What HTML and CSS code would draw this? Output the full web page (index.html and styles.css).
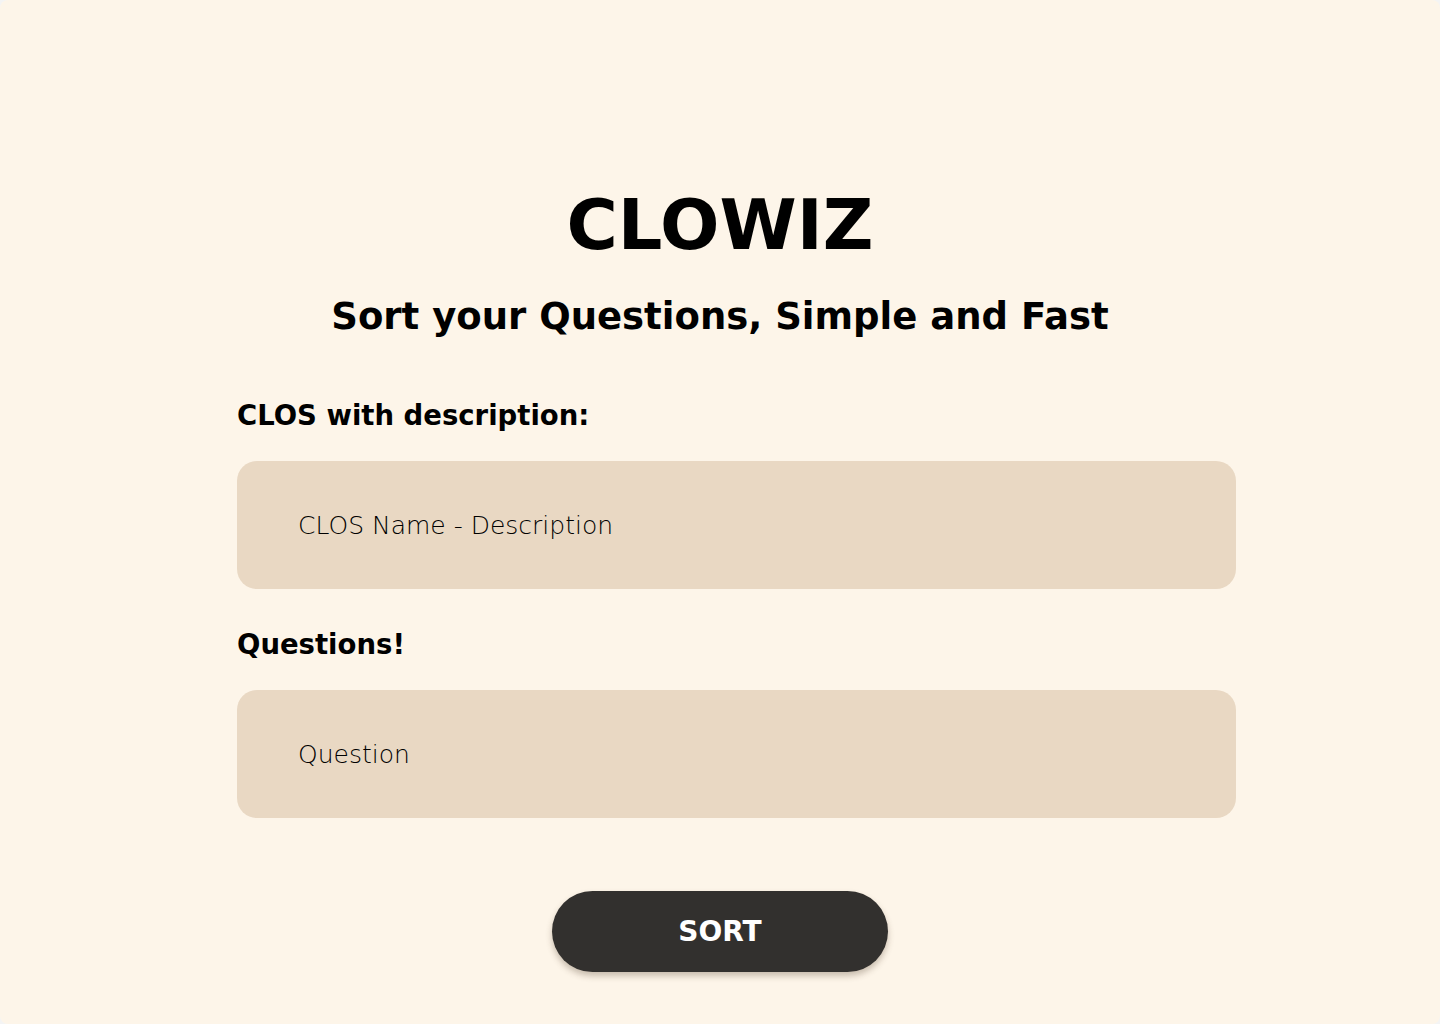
FILE: index.html
```html
<!DOCTYPE html>
<html lang="en">
<head>
<meta charset="utf-8">
<title>CLOWIZ</title>
<link rel="stylesheet" href="styles.css">
</head>
<body>
<div class="frame">
  <main class="app">
    <h1 class="title">CLOWIZ</h1>
    <h2 class="subtitle">Sort your Questions, Simple and Fast</h2>
    <form class="form">
      <label class="label" for="clos">CLOS with description:</label>
      <input class="field" id="clos" type="text" placeholder="CLOS Name - Description">
      <label class="label" for="q">Questions!</label>
      <input class="field" id="q" type="text" placeholder="Question">
    </form>
    <div class="actions">
      <button class="btn" type="button">SORT</button>
    </div>
  </main>
</div>
</body>
</html>
```

FILE: styles.css
```css
* { box-sizing: border-box; }
html, body { margin: 0; padding: 0; background: #f4f4f4; }
body { font-family: "DejaVu Sans", "Open Sans", sans-serif; color: #000; }
.frame {
  width: 1440px;
  height: 1024px;
  background: #fdf5e9;
  border-radius: 8px;
  overflow: hidden;
}
.app {
  width: 1440px;
  padding-top: 180px;
  display: flex;
  flex-direction: column;
}
.title {
  margin: 0;
  text-align: center;
  font-size: 70px;
  font-weight: 700;
  line-height: 90px;
  letter-spacing: 0;
}
.subtitle {
  margin: 0;
  margin-top: 23px;
  text-align: center;
  font-size: 37px;
  font-weight: 700;
  line-height: 48px;
}
.form {
  display: flex;
  flex-direction: column;
  margin-top: 56px;
  margin-left: 237px;
  width: 999px;
}
.label {
  font-size: 27.5px;
  font-weight: 700;
  line-height: 36px;
}
.field {
  margin-top: 28px;
  margin-bottom: 37px;
  height: 128px;
  width: 999px;
  border: none;
  border-radius: 20px;
  background: #e9d8c3;
  padding: 0 61px;
  font-family: "DejaVu Sans", sans-serif;
  font-size: 25px;
  font-weight: 300;
  color: #000;
  outline: none;
}
.field::placeholder { color: #000; opacity: 1; }
.actions { display: flex; justify-content: center; margin-top: 36px; }
.btn {
  width: 336px;
  height: 81px;
  border: none;
  border-radius: 41px;
  background: #32302e;
  color: #fff;
  font-family: "DejaVu Sans", sans-serif;
  font-size: 28px;
  font-weight: 700;
  box-shadow: 0 4px 6px rgba(80, 60, 40, 0.3);
}
```
